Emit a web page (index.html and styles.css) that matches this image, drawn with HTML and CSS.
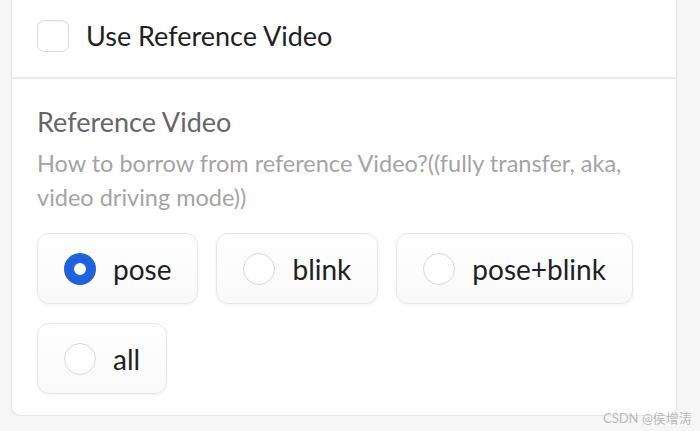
FILE: index.html
```html
<!DOCTYPE html>
<html>
<head>
<meta charset="utf-8">
<link rel="stylesheet" href="styles.css">
</head>
<body>
<div class="card">
  <div class="section top">
    <label class="check">
      <span class="box"></span>
      <span class="check-text">Use Reference Video</span>
    </label>
  </div>
  <div class="section bottom">
    <div class="label">Reference Video</div>
    <div class="info">How to borrow from reference Video?((fully transfer, aka, video driving mode))</div>
    <div class="options">
      <div class="pill"><span class="radio on"></span><span class="opt">pose</span></div>
      <div class="pill"><span class="radio"></span><span class="opt">blink</span></div>
      <div class="pill"><span class="radio"></span><span class="opt">pose+blink</span></div>
      <div class="pill"><span class="radio"></span><span class="opt">all</span></div>
    </div>
  </div>
</div>
<div class="watermark">CSDN @侯增涛</div>
</body>
</html>
```
FILE: styles.css
```css
html, body {
  margin: 0;
  padding: 0;
  background: #f6f6f6;
  font-family: Lato, "Noto Sans", "Noto Sans CJK SC", sans-serif;
  overflow: hidden;
}
.card {
  margin: -11px 0 0 11px;
  width: 664px;
  background: #fff;
  border: 1px solid #e6e6e6;
  border-radius: 10px;
  box-shadow: 0 1px 3px rgba(0,0,0,0.05);
}
.section.top {
  padding: 30px 26px 25px 25px;
  border-bottom: 2px solid #ebebeb;
}
.check {
  display: flex;
  align-items: center;
  gap: 17px;
}
.box {
  width: 30px;
  height: 30px;
  border: 1.5px solid #dcdcdc;
  border-radius: 7px;
  background: #fff;
  box-sizing: content-box;
  box-shadow: inset 0 1px 2px rgba(0,0,0,0.05);
}
.check-text {
  font-size: 27px;
  color: #1f1f1f;
  line-height: 32px;
}
.section.bottom {
  padding: 26px 26px 21px 25px;
}
.label {
  font-size: 27px;
  line-height: 34px;
  color: #666;
}
.info {
  margin-top: 7px;
  font-size: 23.5px;
  line-height: 34px;
  color: #a4a4a4;
  width: 620px;
}
.options {
  margin-top: 19px;
  display: flex;
  flex-wrap: wrap;
  gap: 19px 18px;
}
.pill {
  height: 71px;
  box-sizing: border-box;
  display: flex;
  align-items: center;
  gap: 17px;
  padding: 0 26px;
  border: 1.5px solid #e7e7e7;
  border-radius: 12px;
  background: linear-gradient(#ffffff, #f9f9f9);
  box-shadow: 0 1px 3px rgba(0,0,0,0.06);
}
.radio {
  width: 30px;
  height: 30px;
  border: 1.5px solid #d8d8d8;
  border-radius: 50%;
  background: #fff;
  box-sizing: content-box;
  flex: none;
}
.radio.on {
  width: 12px;
  height: 12px;
  border: 10.5px solid #1f62e0;
}
.opt {
  font-size: 28px;
  color: #1f1f1f;
  line-height: 32px;
}
.watermark {
  position: absolute;
  left: 603px;
  top: 408px;
  font-size: 13px;
  color: #b8b8b8;
  text-shadow: 0 0 2px #fff;
}
```
